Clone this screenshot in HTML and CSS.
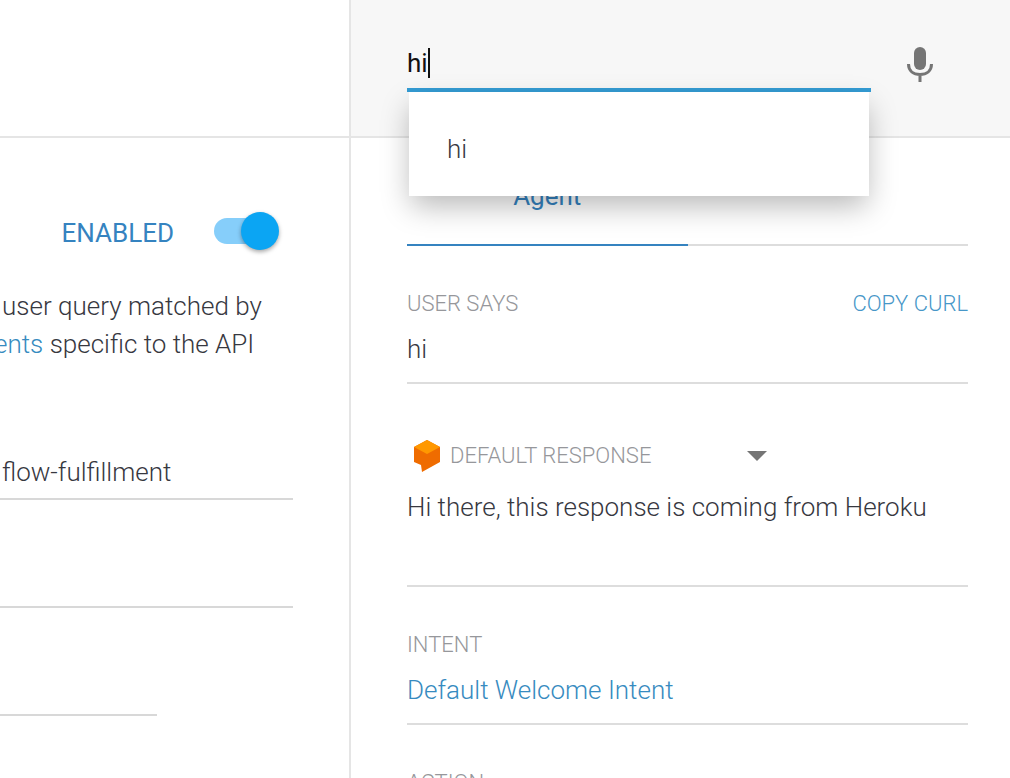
FILE: index.html
```
<!DOCTYPE html>
<html lang="en">
<head>
<meta charset="utf-8">
<title>Fulfillment</title>
<link rel="stylesheet" href="styles.css">
</head>

<body>
<div class="page">
	<main class="settings">
		<header class="settings-header"></header>

		<form class="webhook">
			<label class="enabled">
				ENABLED
				<input type="checkbox" class="switch" role="switch" checked>
			</label>

			<p class="intro">user query matched by<br>
			<a href="#events">ents</a> specific to the API</p>

			<input type="text" class="line url" aria-label="URL" value="flow-fulfillment">
			<input type="text" class="line" aria-label="Username">
			<input type="text" class="line short" aria-label="Header key">
		</form>
	</main>

	<aside class="console">
		<header class="console-header">
			<div class="query">
				<input type="text" class="query-input" aria-label="Try it now" value="hi" autocomplete="off">
				<span class="caret"></span>
				<ul class="suggestions">
					<li><button type="button">hi</button></li>
				</ul>
			</div>
			<button type="button" class="mic" aria-label="Speak">
				<svg viewBox="0 0 28 36" width="28" height="36">
					<rect x="8" y="0" width="12" height="23" rx="6" fill="#757575"/>
					<path d="M2.500 17c0 7 5 10.500 11.500 10.500s11.500-3.500 11.500-10.500M14 27v8" fill="none" stroke="#757575" stroke-width="3"/>
				</svg>
			</button>
		</header>

		<div class="result">
			<nav class="tabs">
				<a href="#agent" class="tab">Agent</a>
			</nav>

			<section class="field">
				<div class="field-head">
					<h2>USER SAYS</h2>
					<a href="#curl" class="copy">COPY CURL</a>
				</div>
				<p>hi</p>
			</section>

			<section class="field response">
				<button type="button" class="platform">
					<svg class="logo" viewBox="0 0 28 34" width="28" height="34">
						<path d="M14 1 27 8v15L9 33 8 26 1 23V8z" fill="#ef6c00"/>
						<path d="M14 1 27 8 14 15 1 8z" fill="#ff9800"/>
					</svg>
					<span class="platform-name">DEFAULT RESPONSE</span>
					<svg class="arrow" viewBox="0 0 20 10" width="20" height="10">
						<path d="M0 0h20L10 10z" fill="#757575"/>
					</svg>
				</button>
				<p>Hi there, this response is coming from Heroku</p>
			</section>

			<section class="field">
				<h2>INTENT</h2>
				<p><a href="#intent">Default Welcome Intent</a></p>
			</section>

			<section class="field">
				<h2>ACTION</h2>
			</section>
		</div>
	</aside>
</div>
</body>
</html>
```
FILE: styles.css
```
* {
	box-sizing: border-box;
}

body {
	margin: 0;
	background: #fff;
	color: #37383f;
	font: 300 26px/38px Roboto, sans-serif;
}

h2, p, ul {
	margin: 0;
	padding: 0;
}

a {
	color: #378bc0;
	text-decoration: none;
}

input, button {
	padding: 0;
	border: 0;
	border-radius: 0;
	background: none;
	color: inherit;
	font: inherit;
	outline: none;
}

button {
	cursor: pointer;
}

.page {
	display: grid;
	grid-template-columns: minmax(0, 349fr) minmax(0, 661fr);
	height: 100vh;
	overflow: hidden;
}

/* Left side */

.settings-header {
	height: 138px;
	border-bottom: 2px solid #e5e5e5;
}

.webhook {
	padding: 76px 56px 0 0;
}

.enabled {
	display: flex;
	align-items: center;
	justify-content: flex-end;
	gap: 40px;
	padding-right: 15px;
	color: #3583c0;
	font-weight: 400;
}

.switch {
	position: relative;
	appearance: none;
	width: 64px;
	height: 26px;
	margin: 0 0 4px;
	border-radius: 13px;
	background: #86cefa;
}

.switch:checked:after {
	content: '';
	position: absolute;
	top: -6px;
	right: -1px;
	width: 38px;
	height: 38px;
	border-radius: 50%;
	background: #0ba5f3;
	box-shadow: 0 2px 4px rgba(0,0,0,.35);
}

.intro {
	padding: 35px 0 0 2px;
	white-space: nowrap;
}

/* the word runs off the left edge */
.intro a {
	margin-left: -8px;
}

.line {
	display: block;
	width: 100%;
	height: 54px;
	margin-top: 54px;
	padding-left: 2px;
	border-bottom: 2px solid #d8d8d8;
}

.url {
	margin-top: 83px;
}

.short {
	width: 157px;
}

/* Right side */

.console {
	border-left: 2px solid #e5e5e5;
}

.console-header {
	display: flex;
	align-items: flex-start;
	height: 138px;
	padding: 36px 42px 0 56px;
	border-bottom: 2px solid #e5e5e5;
	background: #f7f7f7;
}

.query {
	position: relative;
	flex: 1;
}

.query-input {
	display: block;
	width: 100%;
	height: 56px;
	padding-top: 2px;
	border-bottom: 4px solid #349cd4;
	color: #111;
	font-weight: 400;
	caret-color: transparent;
}

.caret {
	position: absolute;
	top: 12px;
	left: 21px;
	width: 2px;
	height: 30px;
	background: #111;
}

.suggestions {
	position: absolute;
	top: 100%;
	left: 2px;
	right: 2px;
	z-index: 1;
	padding: 38px 0 28px;
	background: #fff;
	box-shadow: 0 12px 28px -2px rgba(0,0,0,.28);
	list-style: none;
}

.suggestions button {
	display: block;
	width: 100%;
	padding-left: 38px;
	text-align: left;
}

.mic {
	display: flex;
	justify-content: center;
	width: 97px;
	padding-top: 11px;
}

.result {
	padding: 39px 42px 0 56px;
}

.tabs {
	display: flex;
	border-bottom: 2px solid #ddd;
}

.tab {
	width: 50%;
	height: 69px;
	margin-bottom: -2px;
	border-bottom: 2px solid #3583c0;
	font-weight: 400;
	text-align: center;
	color: #3583c0;
}

.field {
	padding: 43px 0 14px;
	border-bottom: 2px solid #ddd;
}

.field h2, .copy, .platform {
	font-size: 22px;
	font-weight: 300;
	line-height: 30px;
}

.field h2, .platform {
	color: #96979b;
}

.copy {
	color: #4797c8;
}

.field p {
	margin-top: 11px;
}

.field-head {
	display: flex;
	justify-content: space-between;
}

.response {
	padding: 56px 0 59px;
}

.platform {
	display: flex;
	align-items: center;
	width: 360px;
	height: 32px;
	padding-left: 6px;
	text-align: left;
}

.platform-name {
	flex: 1;
	padding-left: 9px;
}

.response p {
	margin-top: 16px;
}
```
